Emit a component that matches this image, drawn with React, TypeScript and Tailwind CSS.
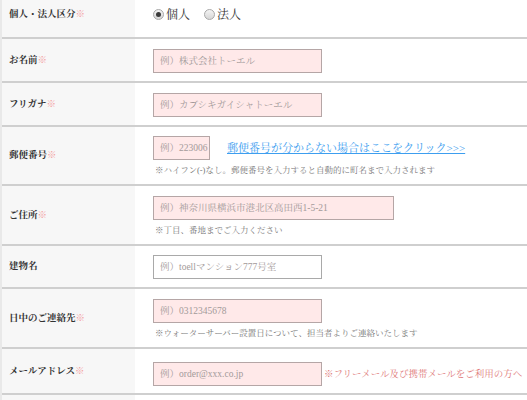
import React from "react";

const FONT =
  "font-[family-name:'Liberation_Serif','Noto_Serif_CJK_JP','Noto_Sans_CJK_JP',serif]";

function Label({ text, req = true }: { text: string; req?: boolean }) {
  return (
    <div className="w-[133px] shrink-0 bg-[#f7f7f7] flex items-center pl-[7px] text-[9.5px] font-bold text-[#333]">
      <span>{text}</span>
      {req && <span className="text-[#f3a0a0] font-normal">※</span>}
    </div>
  );
}

function Field({
  ph,
  w,
  pink = true,
}: {
  ph: string;
  w: string;
  pink?: boolean;
}) {
  return (
    <input
      readOnly
      placeholder={ph}
      className={
        "block h-[24px] pl-[6px] pr-[1px] text-[9.5px] outline-none border placeholder:text-[#a39a9a] " +
        w +
        " " +
        FONT +
        (pink
          ? " bg-[#ffe9e9] border-[#b5a6a6]"
          : " bg-white border-[#a9a9a9]")
      }
    />
  );
}

function Note({ text }: { text: string }) {
  return (
    <div className="mt-[4px] leading-[12px] text-[8.5px] text-[#777] pl-[2px] whitespace-nowrap">
      {text}
    </div>
  );
}

function Radio({ checked, label }: { checked?: boolean; label: string }) {
  return (
    <div className="flex items-center">
      <div className="w-[11px] h-[11px] rounded-full border border-[#a8a8a8] bg-gradient-to-b from-[#f4f4f4] to-[#d6d6d6] flex items-center justify-center">
        {checked && (
          <div className="w-[5px] h-[5px] rounded-full bg-[#3a3a3a]" />
        )}
      </div>
      <span className="ml-[2px] text-[12px] text-[#333]">{label}</span>
    </div>
  );
}

export default function App() {
  return (
    <div
      className={
        "w-[527px] h-[400px] overflow-hidden bg-white border-l-2 border-[#e9e9e9] " +
        FONT
      }
    >
      {/* row 1 */}
      <div className="flex border-b-2 border-[#cfcfcf] h-[39px]">
        <div className="w-[133px] shrink-0 bg-[#f7f7f7] flex items-center pl-[7px] pb-[8px] text-[9.5px] font-bold text-[#333]">
          <span>個人・法人区分</span>
          <span className="text-[#f3a0a0] font-normal">※</span>
        </div>
        <div className="flex-1 flex items-center gap-[14px] pl-[18px] pb-[8px]">
          <Radio checked label="個人" />
          <Radio label="法人" />
        </div>
      </div>

      {/* row 2 */}
      <div className="flex border-b-2 border-[#cfcfcf]">
        <Label text="お名前" />
        <div className="flex-1 pl-[18px] pt-[10px] pb-[8px]">
          <Field ph="例）株式会社トーエル" w="w-[169px]" />
        </div>
      </div>

      {/* row 3 */}
      <div className="flex border-b-2 border-[#cfcfcf]">
        <Label text="フリガナ" />
        <div className="flex-1 pl-[18px] pt-[10px] pb-[8px]">
          <Field ph="例）カブシキガイシャトーエル" w="w-[169px]" />
        </div>
      </div>

      {/* row 4 */}
      <div className="flex border-b-2 border-[#cfcfcf]">
        <Label text="郵便番号" />
        <div className="flex-1 pl-[18px] pt-[9px] pb-[8px]">
          <div className="flex items-center">
            <Field ph="例）223006" w="w-[57px]" />
            <a className="ml-[17px] text-[11px] text-[#3d9eef] underline whitespace-nowrap">
              郵便番号が分からない場合はここをクリック&gt;&gt;&gt;
            </a>
          </div>
          <Note text="※ハイフン(-)なし。郵便番号を入力すると自動的に町名まで入力されます" />
        </div>
      </div>

      {/* row 5 */}
      <div className="flex border-b-2 border-[#cfcfcf]">
        <Label text="ご住所" />
        <div className="flex-1 pl-[18px] pt-[10px] pb-[8px]">
          <Field ph="例）神奈川県横浜市港北区高田西1-5-21" w="w-[241px]" />
          <Note text="※丁目、番地までご入力ください" />
        </div>
      </div>

      {/* row 6 */}
      <div className="flex border-b-2 border-[#cfcfcf]">
        <Label text="建物名" req={false} />
        <div className="flex-1 pl-[18px] pt-[9px] pb-[8px]">
          <Field ph="例）toellマンション777号室" w="w-[169px]" pink={false} />
        </div>
      </div>

      {/* row 7 */}
      <div className="flex border-b-2 border-[#cfcfcf]">
        <Label text="日中のご連絡先" />
        <div className="flex-1 pl-[18px] pt-[10px] pb-[8px]">
          <Field ph="例）0312345678" w="w-[169px]" />
          <Note text="※ウォーターサーバー設置日について、担当者よりご連絡いたします" />
        </div>
      </div>

      {/* row 8 */}
      <div className="flex border-b-2 border-[#cfcfcf]">
        <Label text="メールアドレス" />
        <div className="flex-1 pl-[18px] pt-[13px] pb-[7px] flex items-center min-w-0">
          <Field ph="例）order@xxx.co.jp" w="w-[169px] shrink-0" />
          <span className="ml-[2px] text-[9.5px] text-[#e07a7a] whitespace-nowrap">
            ※フリーメール及び携帯メールをご利用の方へ
          </span>
        </div>
      </div>

      {/* row 9 (cut) */}
      <div className="flex h-[20px]">
        <div className="w-[133px] shrink-0 bg-[#f7f7f7]" />
        <div className="flex-1" />
      </div>
    </div>
  );
}
